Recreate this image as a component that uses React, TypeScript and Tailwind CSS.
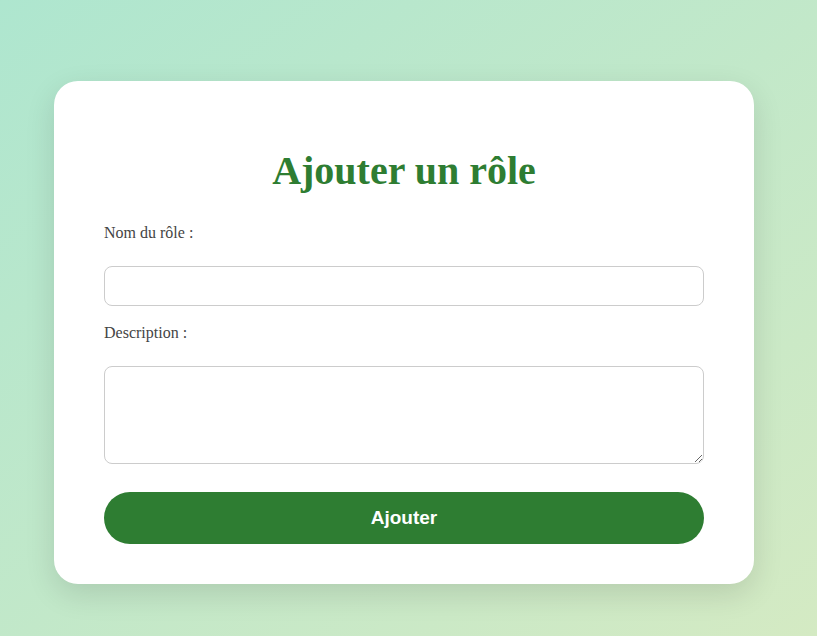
import React from "react";

export default function App() {
  return (
    <div className="w-[817px] h-[636px] bg-gradient-to-br from-[#aee6cf] to-[#d4eac3] flex items-start justify-start pl-[54px] pt-[81px]" style={{ fontFamily: '"Liberation Serif", "Times New Roman", serif' }}>
      <div className="w-[700px] bg-white rounded-[24px] px-[50px] pt-[67px] pb-[40px] shadow-[0_10px_30px_rgba(0,0,0,0.12)]">
        <h1 className="text-[40px] font-bold text-[#2e7d32] text-center leading-[46px] m-0">Ajouter un rôle</h1>
        <form className="flex flex-col mt-[30px]" onSubmit={(e) => e.preventDefault()}>
          <label className="block text-[16px] leading-[18px] text-[#444]">Nom du rôle :</label>
          <input type="text" className="mt-[24px] w-full h-[40px] border border-[#cccccc] rounded-[8px] px-[10px] text-[16px] outline-none" />
          <label className="block text-[16px] leading-[18px] text-[#444] mt-[18px]">Description :</label>
          <textarea className="mt-[24px] w-full h-[98px] border border-[#cccccc] rounded-[8px] px-[10px] py-[8px] text-[16px] outline-none block" />
          <button type="submit" className="mt-[28px] w-full h-[52px] rounded-[26px] bg-[#2e7d32] text-white font-bold text-[19px]" style={{ fontFamily: '"Liberation Sans", Arial, sans-serif' }}>Ajouter</button>
        </form>
      </div>
    </div>
  );
}
